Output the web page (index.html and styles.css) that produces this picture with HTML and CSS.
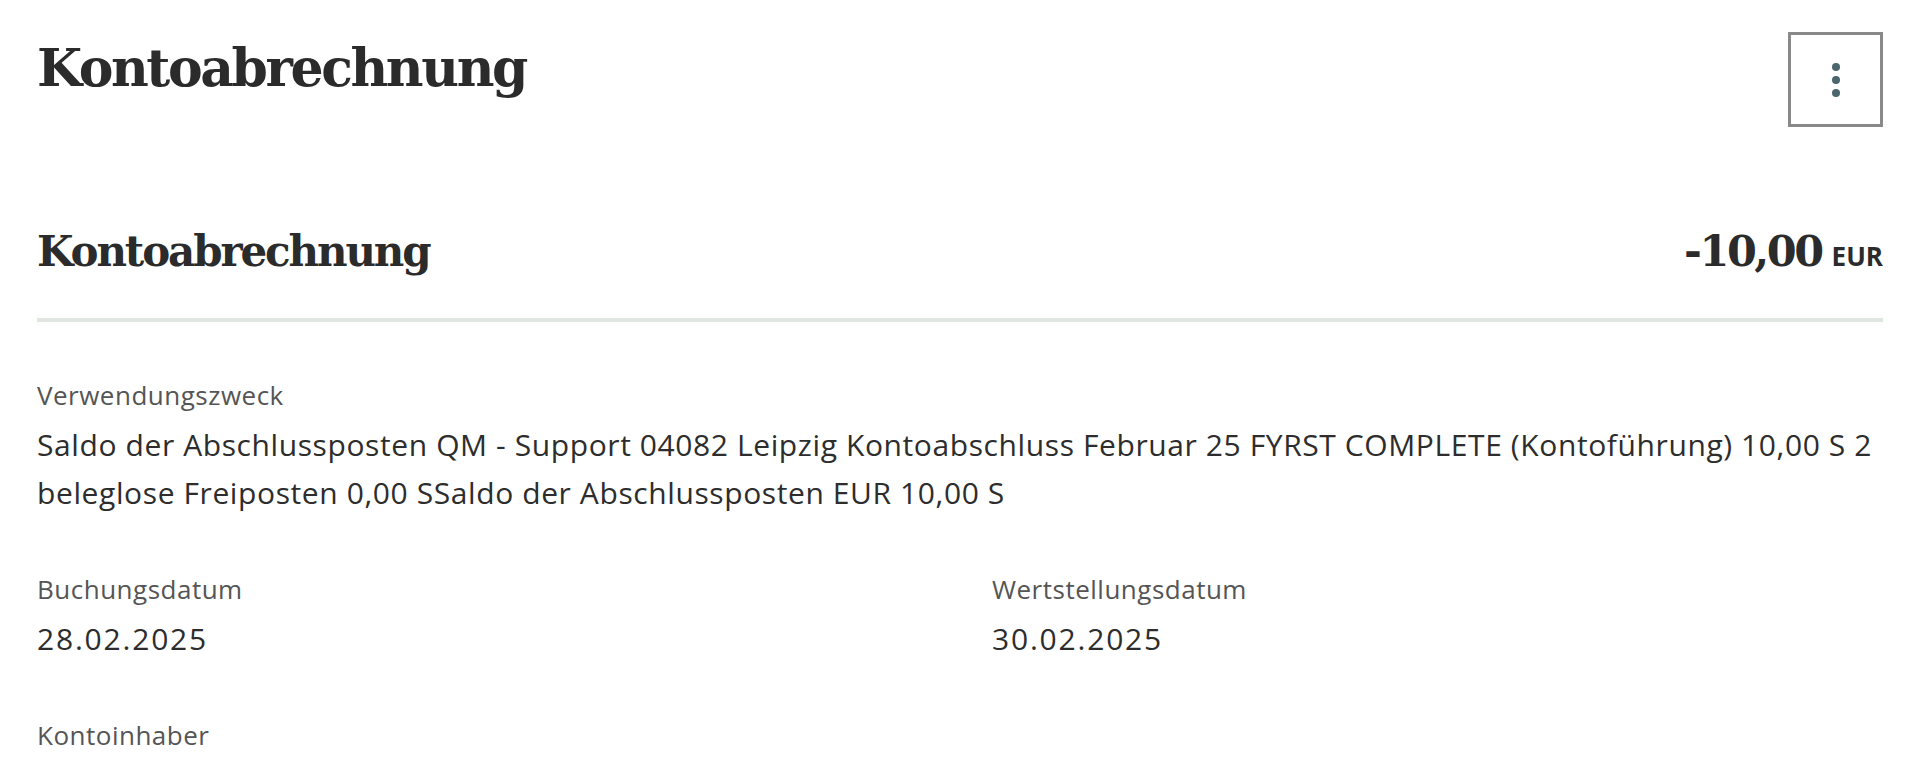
FILE: index.html
```html
<!DOCTYPE html>
<html lang="de">

<head>
    <meta charset="UTF-8">
    <meta name="viewport" content="width=device-width, initial-scale=1.0">
    <title>Kontoabrechnung</title>
    <link rel="stylesheet" href="styles.css">
</head>

<body>
    <div class="page">
        <div class="page-head">
            <h1>Kontoabrechnung</h1>
            <button class="menu-btn" type="button" aria-label="Mehr">
                <span class="dot"></span>
                <span class="dot"></span>
                <span class="dot"></span>
            </button>
        </div>

        <div class="booking-head">
            <h2>Kontoabrechnung</h2>
            <div class="amount">
                <span class="amount-value">-10,00</span>
                <span class="amount-currency">EUR</span>
            </div>
        </div>

        <div class="details">
            <div class="field">
                <span class="field-label">Verwendungszweck</span>
                <span class="field-value">Saldo der Abschlussposten QM - Support 04082 Leipzig Kontoabschluss Februar 25 FYRST COMPLETE (Kontoführung) 10,00 S 2 beleglose Freiposten 0,00 SSaldo der Abschlussposten EUR 10,00 S</span>
            </div>
            <div class="field-row">
                <div class="field">
                    <span class="field-label">Buchungsdatum</span>
                    <span class="field-value date">28.02.2025</span>
                </div>
                <div class="field">
                    <span class="field-label">Wertstellungsdatum</span>
                    <span class="field-value date">30.02.2025</span>
                </div>
            </div>
            <div class="field">
                <span class="field-label">Kontoinhaber</span>
            </div>
        </div>
    </div>
</body>

</html>
```

FILE: styles.css
```css
* {
    margin: 0;
    padding: 0;
    box-sizing: border-box;
}

body {
    background-color: #fff;
    color: #2b2b2b;
    font-family: "Open Sans", Roboto, sans-serif;
}

.page {
    padding: 0 42px 0 37px;
}

.page-head {
    display: flex;
    justify-content: space-between;
    align-items: flex-start;
    padding-top: 32px;
}

h1,
h2,
.amount-value {
    font-family: "DejaVu Serif", "Liberation Serif", serif;
    font-weight: bold;
    color: #2b2b2b;
}

h1 {
    margin-top: 4px;
    font-size: 52px;
    line-height: 64px;
    letter-spacing: -2.4px;
}

.menu-btn {
    width: 95px;
    height: 95px;
    border: 3px solid #898989;
    background-color: #fff;
    display: flex;
    flex-direction: column;
    align-items: center;
    justify-content: center;
    gap: 5px;
}

.dot {
    width: 8px;
    height: 8px;
    border-radius: 50%;
    background-color: #4b666d;
}

.booking-head {
    display: flex;
    justify-content: space-between;
    align-items: baseline;
    margin-top: 98px;
    padding-bottom: 40px;
    border-bottom: 4px solid #dfe7e0;
}

h2 {
    font-size: 42px;
    line-height: 52px;
    letter-spacing: -2.1px;
}

.amount {
    display: flex;
    align-items: baseline;
    gap: 10px;
}

.amount-value {
    font-size: 43px;
    line-height: 52px;
    letter-spacing: -2.5px;
}

.amount-currency {
    font-size: 26px;
    font-weight: bold;
}

.details {
    display: flex;
    flex-direction: column;
    gap: 56px;
    padding-top: 57px;
}

.field {
    display: flex;
    flex-direction: column;
    gap: 10px;
}

.field-row {
    display: grid;
    grid-template-columns: 1fr 1fr;
    column-gap: 64px;
}

.field-label {
    font-size: 26px;
    line-height: 32px;
    letter-spacing: 0.5px;
    color: #555;
}

.field-value {
    font-size: 30px;
    line-height: 48px;
    letter-spacing: 0.6px;
    color: #2d2d2d;
}

.field-value.date {
    letter-spacing: 1.8px;
}
```
